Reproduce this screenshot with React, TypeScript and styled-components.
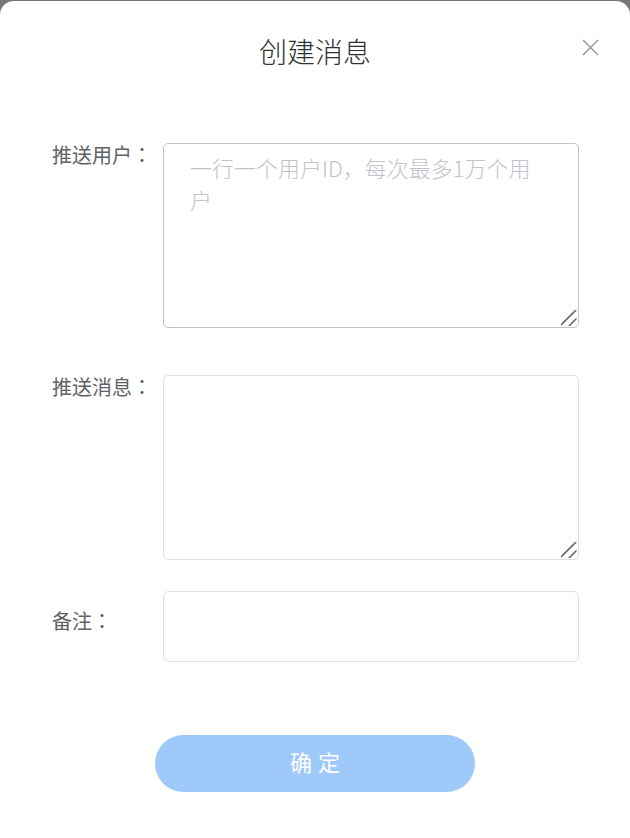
import React, { useState } from 'react';
import styled, { createGlobalStyle } from 'styled-components';

const GlobalStyle = createGlobalStyle`
  html, body {
    margin: 0;
    padding: 0;
    height: 100%;
    background: #767676;
  }
  body {
    font-family: "Noto Sans CJK SC", "Noto Sans", sans-serif;
  }
  #root {
    height: 100%;
  }
`;

const Dialog = styled.div`
  box-sizing: border-box;
  margin-top: 1px;
  height: 837px;
  background: #fff;
  border-radius: 14px 14px 0 0;
  display: flex;
  flex-direction: column;
`;

const Header = styled.div`
  position: relative;
  height: 104px;
  display: flex;
  align-items: center;
  justify-content: center;
`;

const Title = styled.h1`
  margin: 0 0 4px;
  font-size: 28px;
  font-weight: 300;
  color: #303133;
  line-height: 1;
`;

const CloseButton = styled.button`
  position: absolute;
  right: 31px;
  top: 37px;
  width: 18px;
  height: 18px;
  padding: 0;
  border: 0;
  background: transparent;
  cursor: pointer;
  display: flex;
  align-items: center;
  justify-content: center;
`;

const Form = styled.form`
  padding: 38px 51px 0 52px;
  display: flex;
  flex-direction: column;
`;

const Row = styled.div<{ $gap: number; $center?: boolean }>`
  display: flex;
  align-items: ${p => (p.$center ? 'center' : 'flex-start')};
  margin-bottom: ${p => p.$gap}px;
`;

const Label = styled.label<{ $raise?: number }>`
  width: 111px;
  flex-shrink: 0;
  font-size: 20px;
  line-height: 24px;
  color: #606266;
  margin-bottom: ${p => p.$raise ?? 0}px;
  box-sizing: border-box;
`;

// 冒号居中显示，与原设计一致
const Colon = styled.span`
  font-family: "Noto Sans CJK TC", sans-serif;
`;

const Field = styled.div`
  position: relative;
  flex: 1;
  display: flex;
`;

const TextArea = styled.textarea<{ $active?: boolean }>`
  flex: 1;
  box-sizing: border-box;
  height: 185px;
  padding: 7px 26px;
  border: 1px solid ${p => (p.$active ? '#c0c4cc' : '#dcdfe6')};
  border-radius: 5px;
  font-family: inherit;
  font-size: 22px;
  font-weight: 300;
  line-height: 32px;
  color: #606266;
  outline: none;
  resize: vertical;

  &::placeholder {
    color: #c0c4cc;
  }

  &::-webkit-resizer {
    background: transparent;
  }
`;

const Grip = styled.svg`
  position: absolute;
  right: 2px;
  bottom: 2px;
  width: 16px;
  height: 16px;
  pointer-events: none;
`;

const Input = styled.input`
  flex: 1;
  box-sizing: border-box;
  height: 71px;
  padding: 0 26px;
  border: 1px solid #dcdfe6;
  border-radius: 6px;
  font-family: inherit;
  font-size: 22px;
  color: #606266;
  outline: none;
`;

const Footer = styled.div`
  display: flex;
  justify-content: center;
  padding-top: 73px;
`;

const SubmitButton = styled.button`
  width: 320px;
  height: 57px;
  padding: 0 0 5px;
  border: 0;
  border-radius: 29px;
  background: #9ec9f9;
  color: #fff;
  font-family: inherit;
  font-size: 22px;
  letter-spacing: 6px;
  text-indent: 6px;
  cursor: not-allowed;
`;

function ResizeGrip() {
  return (
    <Grip viewBox="0 0 16 16">
      <path d="M0 15 L15 0 M8 16 L15 9" stroke="#666" strokeWidth="1.6" strokeLinecap="round" fill="none" />
    </Grip>
  );
}

export default function App() {
  const [users, setUsers] = useState('');
  const [message, setMessage] = useState('');
  const [remark, setRemark] = useState('');

  return (
    <>
      <GlobalStyle />
      <Dialog>
        <Header>
          <Title>创建消息</Title>
          <CloseButton type="button" aria-label="关闭">
            <svg width="17" height="17" viewBox="0 0 17 17">
              <path d="M1 1 L16 16 M16 1 L1 16" stroke="#8f9399" strokeWidth="1.4" fill="none" />
            </svg>
          </CloseButton>
        </Header>
        <Form onSubmit={e => e.preventDefault()}>
          <Row $gap={47}>
            <Label>推送用户<Colon>：</Colon></Label>
            <Field>
              <TextArea
                $active
                value={users}
                onChange={e => setUsers(e.target.value)}
                placeholder="一行一个用户ID，每次最多1万个用户"
              />
              <ResizeGrip />
            </Field>
          </Row>
          <Row $gap={31}>
            <Label>推送消息<Colon>：</Colon></Label>
            <Field>
              <TextArea value={message} onChange={e => setMessage(e.target.value)} />
              <ResizeGrip />
            </Field>
          </Row>
          <Row $gap={0} $center>
            <Label $raise={12}>备注<Colon>：</Colon></Label>
            <Input value={remark} onChange={e => setRemark(e.target.value)} />
          </Row>
        </Form>
        <Footer>
          <SubmitButton type="button">确定</SubmitButton>
        </Footer>
      </Dialog>
    </>
  );
}
